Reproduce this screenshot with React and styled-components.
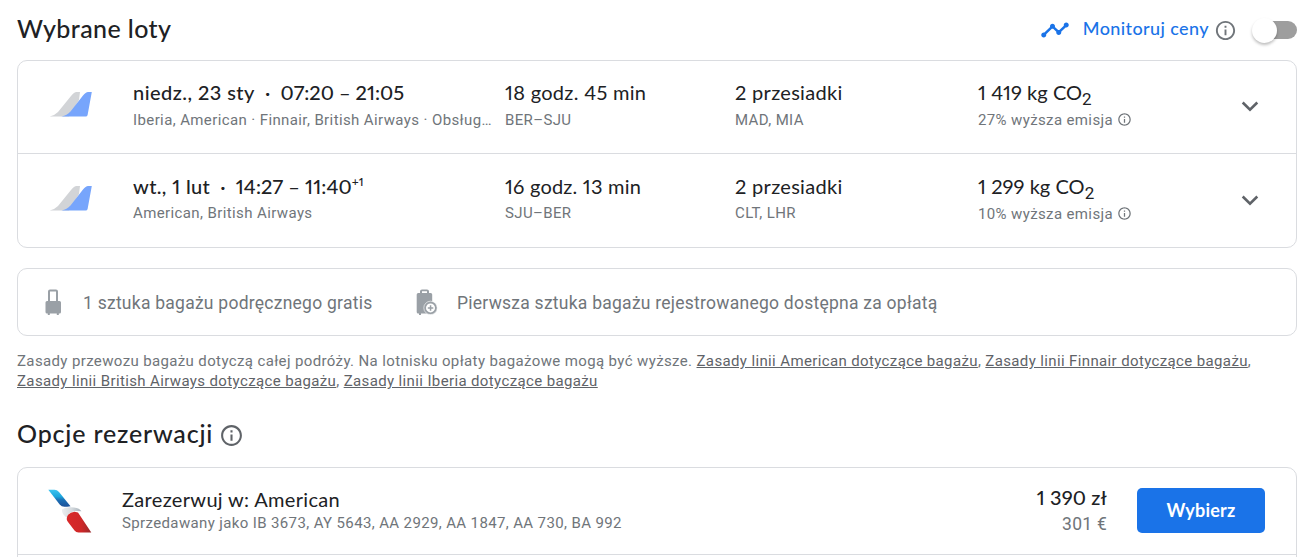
import styled, { createGlobalStyle, css } from "styled-components";

const flights = [
  {
    id: "out",
    date: "niedz., 23 sty",
    time: "07:20 – 21:05",
    airlines: "Iberia, American · Finnair, British Airways · Obsług…",
    duration: "18 godz. 45 min",
    route: "BER–SJU",
    stops: "2 przesiadki",
    airports: "MAD, MIA",
    co2: "1 419 kg CO",
    emission: "27% wyższa emisja",
    dateSpacing: 0.45,
    timeSpacing: 0,
    durationSpacing: 0.3,
  },
  {
    id: "back",
    date: "wt., 1 lut",
    time: "14:27 – 11:40",
    days: "+1",
    airlines: "American, British Airways",
    duration: "16 godz. 13 min",
    route: "SJU–BER",
    stops: "2 przesiadki",
    airports: "CLT, LHR",
    co2: "1 299 kg CO",
    emission: "10% wyższa emisja",
    dateSpacing: 0.35,
    timeSpacing: 0.08,
    durationSpacing: 0.2,
  },
];

function InfoIcon({ size, color = "#70757a" }) {
  return (
    <Icon width={size} height={size} viewBox="0 0 24 24" fill={color}>
      <path d="M11 7h2v2h-2zm0 4h2v6h-2zm1-9C6.48 2 2 6.48 2 12s4.48 10 10 10 10-4.48 10-10S17.52 2 12 2zm0 18c-4.41 0-8-3.59-8-8s3.59-8 8-8 8 3.59 8 8-3.59 8-8 8z" />
    </Icon>
  );
}

function TrendIcon() {
  return (
    <Icon width="30" height="30" viewBox="0 0 24 24" fill="#1a73e8">
      <path d="M23 8c0 1.1-.9 2-2 2-.18 0-.35-.02-.51-.07l-3.56 3.55c.05.16.07.34.07.52 0 1.1-.9 2-2 2s-2-.9-2-2c0-.18.02-.36.07-.52l-2.55-2.55c-.16.05-.34.07-.52.07s-.36-.02-.52-.07l-4.55 4.56c.05.16.07.33.07.51 0 1.1-.9 2-2 2s-2-.9-2-2 .9-2 2-2c.18 0 .35.02.51.07l4.56-4.55C8.02 9.36 8 9.18 8 9c0-1.1.9-2 2-2s2 .9 2 2c0 .18-.02.36-.07.52l2.55 2.55c.16-.05.34-.07.52-.07s.36.02.52.07l3.55-3.56C19.02 8.35 19 8.18 19 8c0-1.1.9-2 2-2s2 .9 2 2z" />
    </Icon>
  );
}

function ChevronIcon() {
  return (
    <Icon width="30" height="30" viewBox="0 0 30 30" fill="none">
      <path d="M7.700 11.500l7.300 7.200 7.300-7.200" stroke="#5f6368" strokeWidth="2.600" />
    </Icon>
  );
}

function TailsLogo() {
  return (
    <Icon width="44" height="28" viewBox="0 0 44 28">
      <path d="M.7 26.600Q5.500 25.500 9 22L22 6Q25.200 2 27.500 2H31L30 10L20 26.600Z" fill="#d2d4d7" />
      <path d="M12.500 26.600Q18 25.500 21.500 21.500L34 5.500Q36.800 2 39 2H42.800L38.600 25Q38.200 26.600 36.700 26.600Z" fill="#77a5fc" />
    </Icon>
  );
}

function AmericanLogo() {
  return (
    <Icon width="44" height="46" viewBox="0 0 44 46">
      <defs>
        <linearGradient id="blue" x1="0" y1="0" x2="0" y2="1">
          <stop offset="0" stopColor="#3cc4f0" />
          <stop offset=".4" stopColor="#1ba5dc" />
          <stop offset=".6" stopColor="#1b6fb5" />
          <stop offset="1" stopColor="#1c5098" />
        </linearGradient>
        <linearGradient id="silver" x1="0" y1="0" x2="1" y2="0">
          <stop offset="0" stopColor="#eceef0" />
          <stop offset=".5" stopColor="#d5dade" />
          <stop offset="1" stopColor="#a5b0ba" />
        </linearGradient>
        <linearGradient id="red" x1="0" y1="0" x2="1" y2="0">
          <stop offset="0" stopColor="#d9292a" />
          <stop offset=".6" stopColor="#cf2728" />
          <stop offset="1" stopColor="#982a2c" />
        </linearGradient>
      </defs>
      <path d="M.3 1.700H6.500Q9 1.700 11 4L22.500 18.300Q19 18.800 16.500 18.800Q13.500 18.800 11.700 16.500Z" fill="url(#blue)" />
      <path d="M14 21.500Q17 19 23 19.300Q31 19.500 33.500 23.300L28 23Q19.500 24 18.900 29.800Q13.500 26 14 21.500Z" fill="url(#silver)" />
      <path d="M18.700 31Q18.200 25.500 26.500 23.800L30 24.500L43.300 44.600H30.500Q28 44.600 26.500 42.500L20 34Q18.800 32.500 18.700 31Z" fill="url(#red)" />
    </Icon>
  );
}

function CarryOnIcon() {
  return (
    <Icon width="17" height="27" viewBox="0 0 17 27" fill="#9aa0a6">
      <path d="M3 12V2.500Q3 .5 5 .5h6q2 0 2 2V12h1.500q1.500 0 1.500 1.500v9.500q0 1.500-1.500 1.500H13.800v1.500h-2v-1.500H4.800v1.500h-2v-1.500H2Q.5 24.500.5 23v-9.500Q.5 12 2 12Zm2 0h6V2.500H5Z" fillRule="evenodd" />
    </Icon>
  );
}

function CheckedBagIcon() {
  return (
    <Icon width="22" height="27" viewBox="0 0 22 27" fill="#9aa0a6">
      <path d="M4 4V2.300Q4 .5 6 .5h5q2 0 2 1.800V4h1.700q1.500 0 1.500 1.500V24.500H5v1.500H3v-1.500H2.200Q.7 24.500.7 23V5.500Q.7 4 2.200 4Zm2 0h5V2.300H6Z" fillRule="evenodd" />
      <circle cx="14.500" cy="18.900" r="6.700" stroke="#fff" strokeWidth=".6" />
      <circle cx="14.500" cy="18.900" r="4.500" fill="#fff" />
      <path d="M13.800 16.200h1.500v2h2v1.500h-2v2h-1.500v-2h-2v-1.500h2z" />
    </Icon>
  );
}

function Flight({ flight }) {
  return (
    <FlightRow>
      <TailsLogo />
      <Cell>
        <Primary $weight={500} $spacing={flight.dateSpacing}>
          {flight.date}
          <Dot>·</Dot>
          <Time $spacing={flight.timeSpacing}>{flight.time}</Time>
          {flight.days && <Days>{flight.days}</Days>}
        </Primary>
        <Airlines>{flight.airlines}</Airlines>
      </Cell>
      <Cell>
        <Primary $spacing={flight.durationSpacing}>{flight.duration}</Primary>
        <Secondary>{flight.route}</Secondary>
      </Cell>
      <Cell>
        <Primary $spacing={0.3}>{flight.stops}</Primary>
        <Secondary>{flight.airports}</Secondary>
      </Cell>
      <Cell>
        <Primary $spacing={0.05}>
          {flight.co2}
          <Sub>2</Sub>
        </Primary>
        <Emission>
          {flight.emission}
          <InfoIcon size={15} />
        </Emission>
      </Cell>
      <Expand aria-label="Rozwiń">
        <ChevronIcon />
      </Expand>
    </FlightRow>
  );
}

export default function App() {
  return (
    <Page>
      <GlobalStyle />
      <Header>
        <Heading $spacing={0.4}>Wybrane loty</Heading>
        <Track>
          <TrendIcon />
          <TrackLabel>Monitoruj ceny</TrackLabel>
          <InfoIcon size={23} />
          <Toggle role="switch" aria-checked="false">
            <Knob />
          </Toggle>
        </Track>
      </Header>

      <Card>
        {flights.map((flight) => (
          <Flight key={flight.id} flight={flight} />
        ))}
      </Card>

      <Baggage>
        <CarryOnIcon />
        <BaggageText $wide>1 sztuka bagażu podręcznego gratis</BaggageText>
        <CheckedBagIcon />
        <BaggageText>
          Pierwsza sztuka bagażu rejestrowanego dostępna za opłatą
        </BaggageText>
      </Baggage>

      <Policy>
        Zasady przewozu bagażu dotyczą całej podróży. Na lotnisku opłaty
        bagażowe mogą być wyższe.{" "}
        <PolicyLink>Zasady linii American dotyczące bagażu</PolicyLink>,{" "}
        <PolicyLink>Zasady linii Finnair dotyczące bagażu</PolicyLink>,
        <br />
        <PolicyLink>Zasady linii British Airways dotyczące bagażu</PolicyLink>,{" "}
        <PolicyLink>Zasady linii Iberia dotyczące bagażu</PolicyLink>
      </Policy>

      <OptionsHeader>
        <Heading $spacing={0.82}>Opcje rezerwacji</Heading>
        <InfoIcon size={25} color="#5f6368" />
      </OptionsHeader>

      <OptionsCard>
        <Option>
          <AmericanLogo />
          <OptionText>
            <Primary $spacing={0.33}>Zarezerwuj w: American</Primary>
            <Secondary>
              Sprzedawany jako IB 3673, AY 5643, AA 2929, AA 1847, AA 730, BA
              992
            </Secondary>
          </OptionText>
          <Price>
            <Primary $weight={500} $spacing={0.15}>
              1 390 zł
            </Primary>
            <Converted>301 €</Converted>
          </Price>
          <Select>Wybierz</Select>
        </Option>
      </OptionsCard>
    </Page>
  );
}

const GlobalStyle = createGlobalStyle`
  body {
    margin: 0;
    background: #fff;
    overflow: hidden;
  }

  * {
    box-sizing: border-box;
  }
`;

const display = css`
  font-family: Lato, Roboto, sans-serif;
  font-variant-numeric: proportional-nums;
`;

const Page = styled.main`
  height: 557px;
  padding: 0 6px 0 17px;
  overflow: hidden;
  font-family: Roboto, "Liberation Sans", sans-serif;
  color: #202124;
`;

const Icon = styled.svg`
  display: block;
  flex: none;
`;

const Header = styled.header`
  display: flex;
  align-items: center;
  justify-content: space-between;
  height: 60px;
`;

const Heading = styled.h2`
  ${display}
  margin: 0;
  padding-bottom: 3px;
  font-size: 25px;
  font-weight: 500;
  line-height: 27px;
  letter-spacing: ${(p) => p.$spacing}px;
  white-space: nowrap;
`;

const Track = styled.div`
  display: flex;
  align-items: center;
`;

const TrackLabel = styled.span`
  ${display}
  margin: 0 5px 0 13px;
  padding-bottom: 3px;
  font-size: 18px;
  font-weight: 500;
  line-height: 23px;
  letter-spacing: 0.4px;
  color: #1a73e8;
`;

const Toggle = styled.button`
  display: flex;
  align-items: center;
  width: 45px;
  height: 18px;
  margin-left: 15px;
  padding: 0;
  border: 0;
  border-radius: 9px;
  background: linear-gradient(90deg, transparent 12px, #9e9e9e 12px);
`;

const Knob = styled.span`
  width: 25px;
  height: 25px;
  border-radius: 50%;
  background: #fff;
  box-shadow: 0 2px 3px rgba(0, 0, 0, 0.25);
`;

const Card = styled.section`
  width: 1280px;
  height: 188px;
  border: 1px solid #dadce0;
  border-radius: 10px;
`;

const Cell = styled.div`
  min-width: 0;
  padding-right: 10px;
`;

const Primary = styled.div`
  ${display}
  height: 25px;
  font-size: 20px;
  font-weight: ${(p) => p.$weight || 400};
  line-height: 23px;
  letter-spacing: ${(p) => p.$spacing}px;
  white-space: nowrap;
`;

const Secondary = styled.div`
  margin-top: 4px;
  font-size: 15px;
  line-height: 20px;
  letter-spacing: 0.37px;
  color: #70757a;
  overflow: hidden;
  text-overflow: ellipsis;
  white-space: nowrap;
`;

const Airlines = styled(Secondary)`
  letter-spacing: 0.39px;
`;

const Emission = styled.div`
  display: flex;
  align-items: center;
  gap: 4px;
  margin-top: 4px;
  font-size: 15px;
  line-height: 20px;
  letter-spacing: 0.37px;
  color: #70757a;

  svg {
    margin-bottom: 1px;
  }
`;

const FlightRow = styled.div`
  display: grid;
  grid-template-columns: 83px 372px 230px 243px 1fr 30px;
  height: 92px;
  padding: 20px 31px 0 32px;

  > svg {
    margin: 9px 0 0 -1px;
  }

  & + & {
    height: 94px;
    padding-top: 21px;
    border-top: 1px solid #dadce0;
  }

  & + & ${Secondary} {
    margin-top: 3px;
  }
`;

const Dot = styled.span`
  margin: 0 10px;
`;

const Time = styled.span`
  letter-spacing: ${(p) => p.$spacing}px;
`;

const Days = styled.sup`
  font-size: 12px;
  line-height: 0;
  letter-spacing: 0;
`;

const Sub = styled.sub`
  font-family: Roboto, sans-serif;
  font-size: 17px;
  line-height: 0;
`;

const Expand = styled.button`
  grid-column: 6;
  width: 30px;
  height: 30px;
  margin-top: 10px;
  padding: 0;
  border: 0;
  background: none;
`;

const Baggage = styled(Card)`
  display: flex;
  align-items: center;
  height: 68px;
  margin-top: 20px;
  padding-left: 27px;
`;

const BaggageText = styled.span`
  width: ${(p) => (p.$wide ? "354px" : "auto")};
  padding: 2px 0 0 ${(p) => (p.$wide ? 21 : 19)}px;
  font-size: 17.5px;
  line-height: 25px;
  letter-spacing: 0.25px;
  color: #70757a;
  white-space: nowrap;
`;

const Policy = styled.p`
  margin: 15px 0 0;
  font-size: 15px;
  line-height: 20px;
  letter-spacing: 0.37px;
  color: #70757a;
  white-space: nowrap;
`;

const PolicyLink = styled.a`
  color: #5f6368;
  text-decoration: underline;
`;

const OptionsHeader = styled.div`
  display: flex;
  align-items: center;
  gap: 6px;
  height: 30px;
  margin: 29px 0 17px;
`;

const OptionsCard = styled(Card)`
  height: 110px;
`;

const Option = styled.div`
  display: flex;
  align-items: flex-start;
  height: 87px;
  padding: 20px 31px 0 30px;
  border-bottom: 1px solid #dadce0;
`;

const OptionText = styled.div`
  flex: 1;
  padding-left: 30px;

  ${Secondary} {
    margin-top: 0;
  }
`;

const Price = styled.div`
  margin: -2px 30px 0 0;
  text-align: right;
`;

const Converted = styled.div`
  padding-top: 1px;
  font-size: 17.5px;
  line-height: 25px;
  letter-spacing: 0.25px;
  color: #70757a;
`;

const Select = styled.button`
  ${display}
  width: 128px;
  height: 45px;
  padding: 0 0 2px;
  border: 0;
  border-radius: 5px;
  background: #1a73e8;
  color: #fff;
  font-size: 18px;
  font-weight: 700;
  letter-spacing: 0.2px;
`;
